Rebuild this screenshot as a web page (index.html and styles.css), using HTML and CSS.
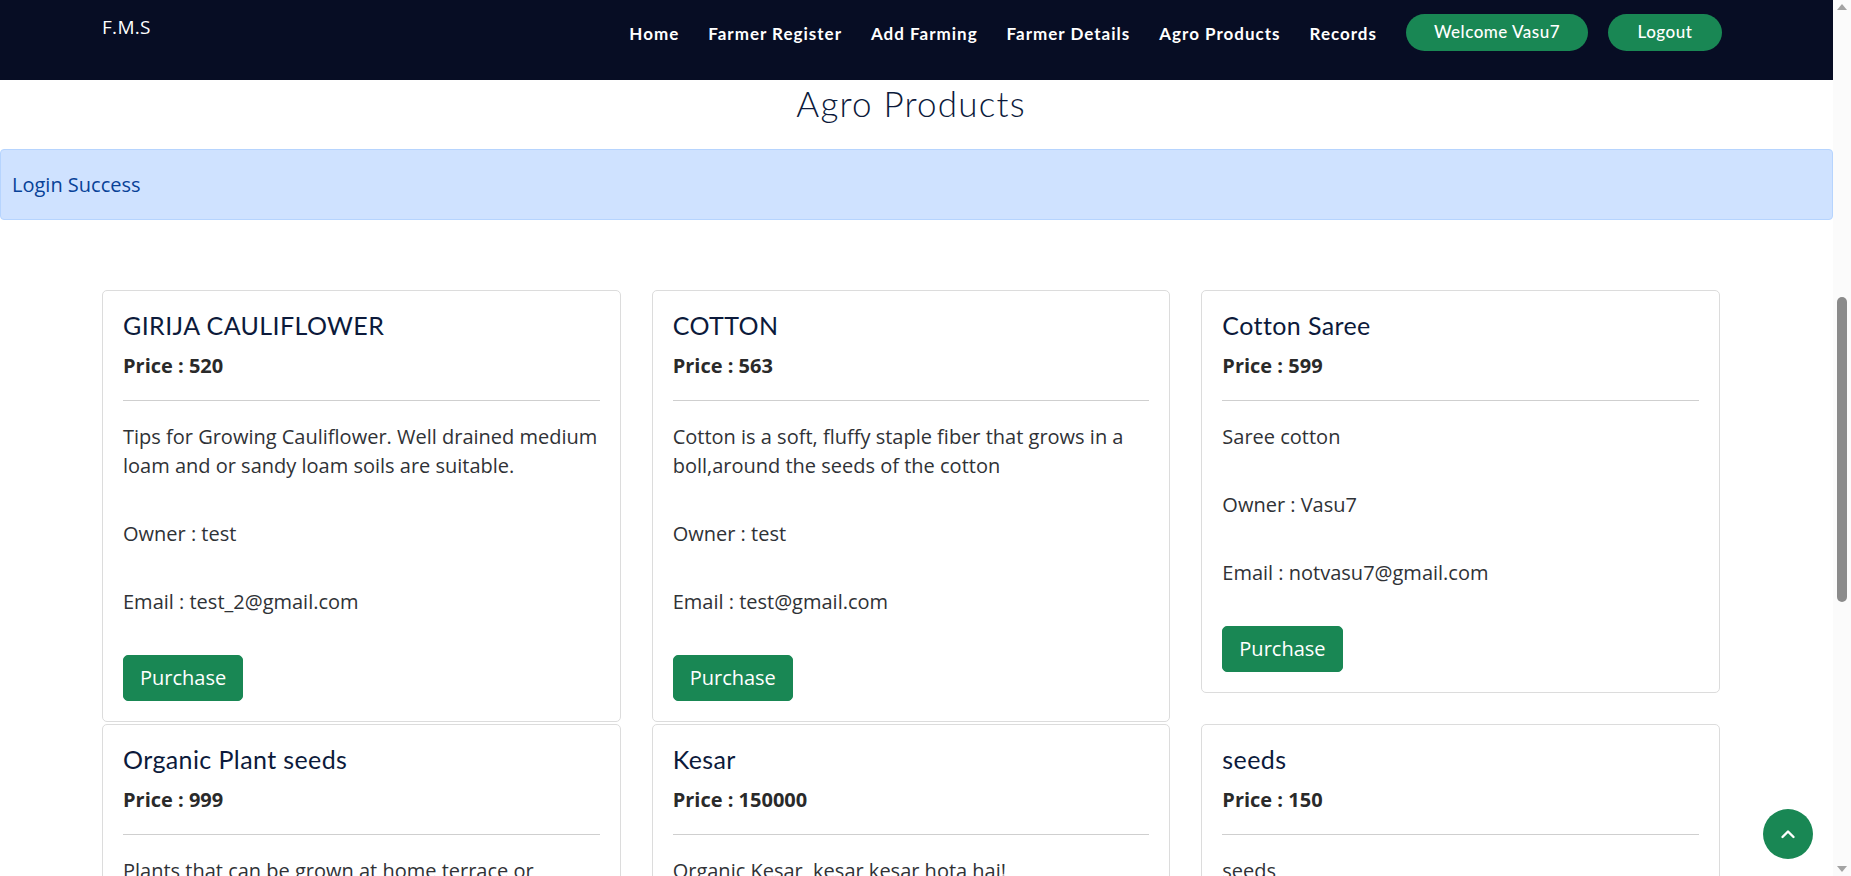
FILE: index.html
```html
<!DOCTYPE html>
<html lang="en">
<head>
<meta charset="utf-8">
<title>Agro Products - F.M.S</title>
<link rel="stylesheet" href="styles.css">
</head>
<body>
<header class="navbar">
  <div class="nav-inner">
    <a class="brand" href="#">F.M.S</a>
    <nav class="nav-links">
      <a href="#">Home</a>
      <a href="#">Farmer Register</a>
      <a href="#">Add Farming</a>
      <a href="#">Farmer Details</a>
      <a href="#">Agro Products</a>
      <a href="#">Records</a>
      <a class="pill pill-welcome" href="#">Welcome Vasu7</a>
      <a class="pill pill-logout" href="#">Logout</a>
    </nav>
  </div>
</header>

<main class="page">
  <h2 class="page-title">Agro Products</h2>
  <div class="alert">Login Success</div>

  <section class="products">
    <div class="card">
      <h3 class="card-title">GIRIJA CAULIFLOWER</h3>
      <p class="price">Price : 520</p>
      <hr class="sep">
      <p>Tips for Growing Cauliflower. Well drained medium loam and or sandy loam soils are suitable.</p>
      <p>Owner : test</p>
      <p>Email : test_2@gmail.com</p>
      <button class="btn-buy">Purchase</button>
    </div>
    <div class="card">
      <h3 class="card-title">COTTON</h3>
      <p class="price">Price : 563</p>
      <hr class="sep">
      <p>Cotton is a soft, fluffy staple fiber that grows in a boll,around the seeds of the cotton</p>
      <p>Owner : test</p>
      <p>Email : test@gmail.com</p>
      <button class="btn-buy">Purchase</button>
    </div>
    <div class="card">
      <h3 class="card-title">Cotton Saree</h3>
      <p class="price">Price : 599</p>
      <hr class="sep">
      <p>Saree cotton</p>
      <p>Owner : Vasu7</p>
      <p>Email : notvasu7@gmail.com</p>
      <button class="btn-buy">Purchase</button>
    </div>
    <div class="card">
      <h3 class="card-title">Organic Plant seeds</h3>
      <p class="price">Price : 999</p>
      <hr class="sep">
      <p>Plants that can be grown at home terrace or</p>
    </div>
    <div class="card">
      <h3 class="card-title">Kesar</h3>
      <p class="price">Price : 150000</p>
      <hr class="sep">
      <p>Organic Kesar, kesar kesar hota hai!</p>
    </div>
    <div class="card">
      <h3 class="card-title">seeds</h3>
      <p class="price">Price : 150</p>
      <hr class="sep">
      <p>seeds</p>
    </div>
  </section>
</main>

<a class="to-top" href="#" aria-label="Back to top">
  <svg width="18" height="18" viewBox="0 0 18 18"><path d="M3.5 12 L9 6.5 L14.5 12" fill="none" stroke="#fff" stroke-width="2.4" stroke-linecap="round" stroke-linejoin="round"/></svg>
</a>

<div class="scrollbar" aria-hidden="true">
  <span class="sb-up"></span>
  <span class="sb-thumb"></span>
  <span class="sb-down"></span>
</div>
</body>
</html>
```
FILE: styles.css
```css
* { box-sizing: border-box; }
html, body { height: 100%; overflow: hidden; }
body {
  margin: 0;
  font-family: "Open Sans", "Noto Sans", sans-serif;
  font-size: 20px;
  color: #2f3236;
  background: #fff;
  width: 1833px;
}
a { text-decoration: none; }

.navbar {
  height: 80px;
  background: #070d24;
}
.nav-inner {
  margin-left: 102px;
  width: 1620px;
  display: flex;
  justify-content: space-between;
  align-items: flex-start;
}
.brand {
  color: #fff;
  font-family: "Open Sans", sans-serif;
  font-size: 19px;
  line-height: 24px;
  margin-top: 15px;
  letter-spacing: 0.3px;
}
.nav-links {
  display: flex;
  align-items: flex-start;
  padding-top: 14px;
}
.nav-links a {
  color: #fff;
  font-family: "Lato", sans-serif;
  font-weight: 700;
  font-size: 17px;
  letter-spacing: 1px;
  line-height: 20px;
  margin-top: 10px;
  margin-left: 29px;
}
.nav-links a.pill {
  margin-top: 0;
  height: 37px;
  line-height: 35px;
  border-radius: 20px;
  background: #198754;
  font-weight: 500;
  font-size: 17px;
  letter-spacing: 0.5px;
  text-align: center;
}
.pill-welcome { width: 182px; }
.nav-links a.pill-logout { width: 114px; margin-left: 20px; }

.page-title {
  margin: 4px 0 0 102px;
  width: 1618px;
  text-align: center;
  font-family: "Lato", sans-serif;
  font-weight: 300;
  font-size: 35px;
  letter-spacing: 1.2px;
  line-height: 38px;
  color: #0c1a3b;
}
.alert {
  margin-top: 27px;
  background: #cfe2ff;
  border: 1px solid #b6d4fe;
  border-radius: 4px;
  color: #084298;
  padding: 21px 11px;
  line-height: 27px;
}

.products {
  margin: 70px 0 0 102px;
  width: 1618px;
  display: grid;
  grid-template-columns: repeat(3, 1fr);
  column-gap: 31px;
  row-gap: 2px;
  align-items: start;
}
.card {
  border: 1px solid #dcdcdc;
  border-radius: 5px;
  padding: 20px 20px 20px;
}
.card-title {
  margin: 0;
  font-family: "Lato", sans-serif;
  font-weight: 400;
  font-size: 25px;
  letter-spacing: 0.4px;
  line-height: 29px;
  color: #0c1a3b;
}
.card p {
  margin: 0 0 39px;
  line-height: 29px;
}
.card p.price {
  margin: 11px 0 20px;
  font-weight: 700;
  color: #2a2a2a;
}
.sep {
  border: 0;
  border-top: 1px solid #cfcfcf;
  margin: 0 0 21px;
}
.btn-buy {
  display: block;
  font-family: "Open Sans", sans-serif;
  font-size: 20px;
  line-height: 28px;
  padding: 8px 16px;
  border: 1px solid #198754;
  border-radius: 5px;
  background: #198754;
  color: #fff;
}

.to-top {
  position: fixed;
  right: 38px;
  bottom: 17px;
  width: 50px;
  height: 50px;
  border-radius: 50%;
  background: #198754;
  display: flex;
  align-items: center;
  justify-content: center;
}

.scrollbar {
  position: fixed;
  top: 0;
  right: 0;
  width: 18px;
  height: 100%;
  background: #fbfbfb;
}
.sb-up, .sb-down {
  position: absolute;
  left: 4px;
  width: 0;
  height: 0;
  border-left: 5px solid transparent;
  border-right: 5px solid transparent;
}
.sb-up { top: 4px; border-bottom: 6px solid #a3a3a3; }
.sb-down { bottom: 4px; border-top: 6px solid #a3a3a3; }
.sb-thumb {
  position: absolute;
  left: 4px;
  top: 297px;
  width: 10px;
  height: 305px;
  border-radius: 5px;
  background: #8b8b8b;
}
```
